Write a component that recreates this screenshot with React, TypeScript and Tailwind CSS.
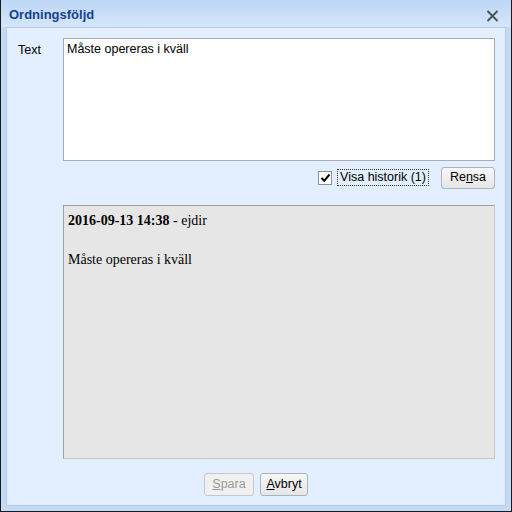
import React from "react";

export default function App() {
  const ui = { fontFamily: '"Liberation Sans", Arial, sans-serif' };
  const serif = { fontFamily: '"Liberation Serif", "Times New Roman", serif' };
  return (
    <div
      className="w-[512px] h-[512px] bg-[#c3dbf6] border-l border-r border-b border-[#1a1a1a] flex flex-col overflow-hidden"
      style={ui}
    >
      <div className="h-[27px] flex items-center justify-between pl-[8px] pr-[12px] bg-gradient-to-b from-[#bcd6f5] to-[#d5e6fa]">
        <span className="text-[13px] font-bold text-[#15428b] leading-none pt-[2px]">Ordningsföljd</span>
        <svg width="13" height="12" viewBox="0 0 13 12" className="mt-[5px]">
          <path d="M1.5 1 L11.5 11 M11.5 1 L1.5 11" stroke="#4a4f55" strokeWidth="1.8" strokeLinecap="butt" />
        </svg>
      </div>
      <div className="flex-1 mx-[5px] mb-[5px] border border-[#b6cbe4] bg-[#e3efff] flex flex-col pt-[10px]">
        <div className="flex">
          <div className="w-[56px] pl-[11px] pt-[3px] text-[12.5px] text-black">Text</div>
          <div className="w-[432px] h-[123px] bg-white border border-[#a5acb5] px-[3px] pt-[1px] text-[12.5px] text-black">
            Måste opereras i kväll
          </div>
        </div>
        <div className="flex justify-end items-center mt-[5px] mr-[10px] h-[23px]">
          <div className="w-[14px] h-[14px] bg-white border border-[#8f8f8f] flex items-center justify-center">
            <svg width="11" height="10" viewBox="0 0 11 10">
              <path d="M1.5 5 L4.2 7.8 L9.5 1.5" stroke="#000" strokeWidth="2" fill="none" />
            </svg>
          </div>
          <div className="ml-[5px] px-[2px] border border-dotted border-[#333] text-[12.5px] leading-[15px] text-black">
            Visa historik (1)
          </div>
          <div className="ml-[12px] w-[54px] h-[22px] rounded-[3px] border border-[#a9b3bd] bg-gradient-to-b from-[#f7f7f7] to-[#e6e6e6] flex items-center justify-center text-[12.5px] text-black">
            <span>
              Re<span className="underline">n</span>sa
            </span>
          </div>
        </div>
        <div
          className="ml-[56px] mt-[16px] w-[432px] h-[254px] bg-[#e6e6e6] border border-[#a0a0a0] border-r-[#c8c8c8] border-b-[#c8c8c8] px-[4px] pt-[4px] text-[14px] text-black"
          style={serif}
        >
          <div>
            <span className="font-bold">2016-09-13 14:38</span> - ejdir
          </div>
          <div className="mt-[18px]">Måste opereras i kväll</div>
        </div>
        <div className="flex justify-center gap-[6px] mt-[14px]">
          <div className="w-[50px] h-[23px] rounded-[3px] border border-[#c3c8cf] bg-[#f0f0f0] flex items-center justify-center text-[12.5px] text-[#9a9a9a]">
            <span>
              <span className="underline">S</span>para
            </span>
          </div>
          <div className="w-[48px] h-[23px] rounded-[3px] border border-[#a9b3bd] bg-gradient-to-b from-[#f7f7f7] to-[#e6e6e6] flex items-center justify-center text-[12.5px] text-black">
            <span>
              <span className="underline">A</span>vbryt
            </span>
          </div>
        </div>
      </div>
    </div>
  );
}
